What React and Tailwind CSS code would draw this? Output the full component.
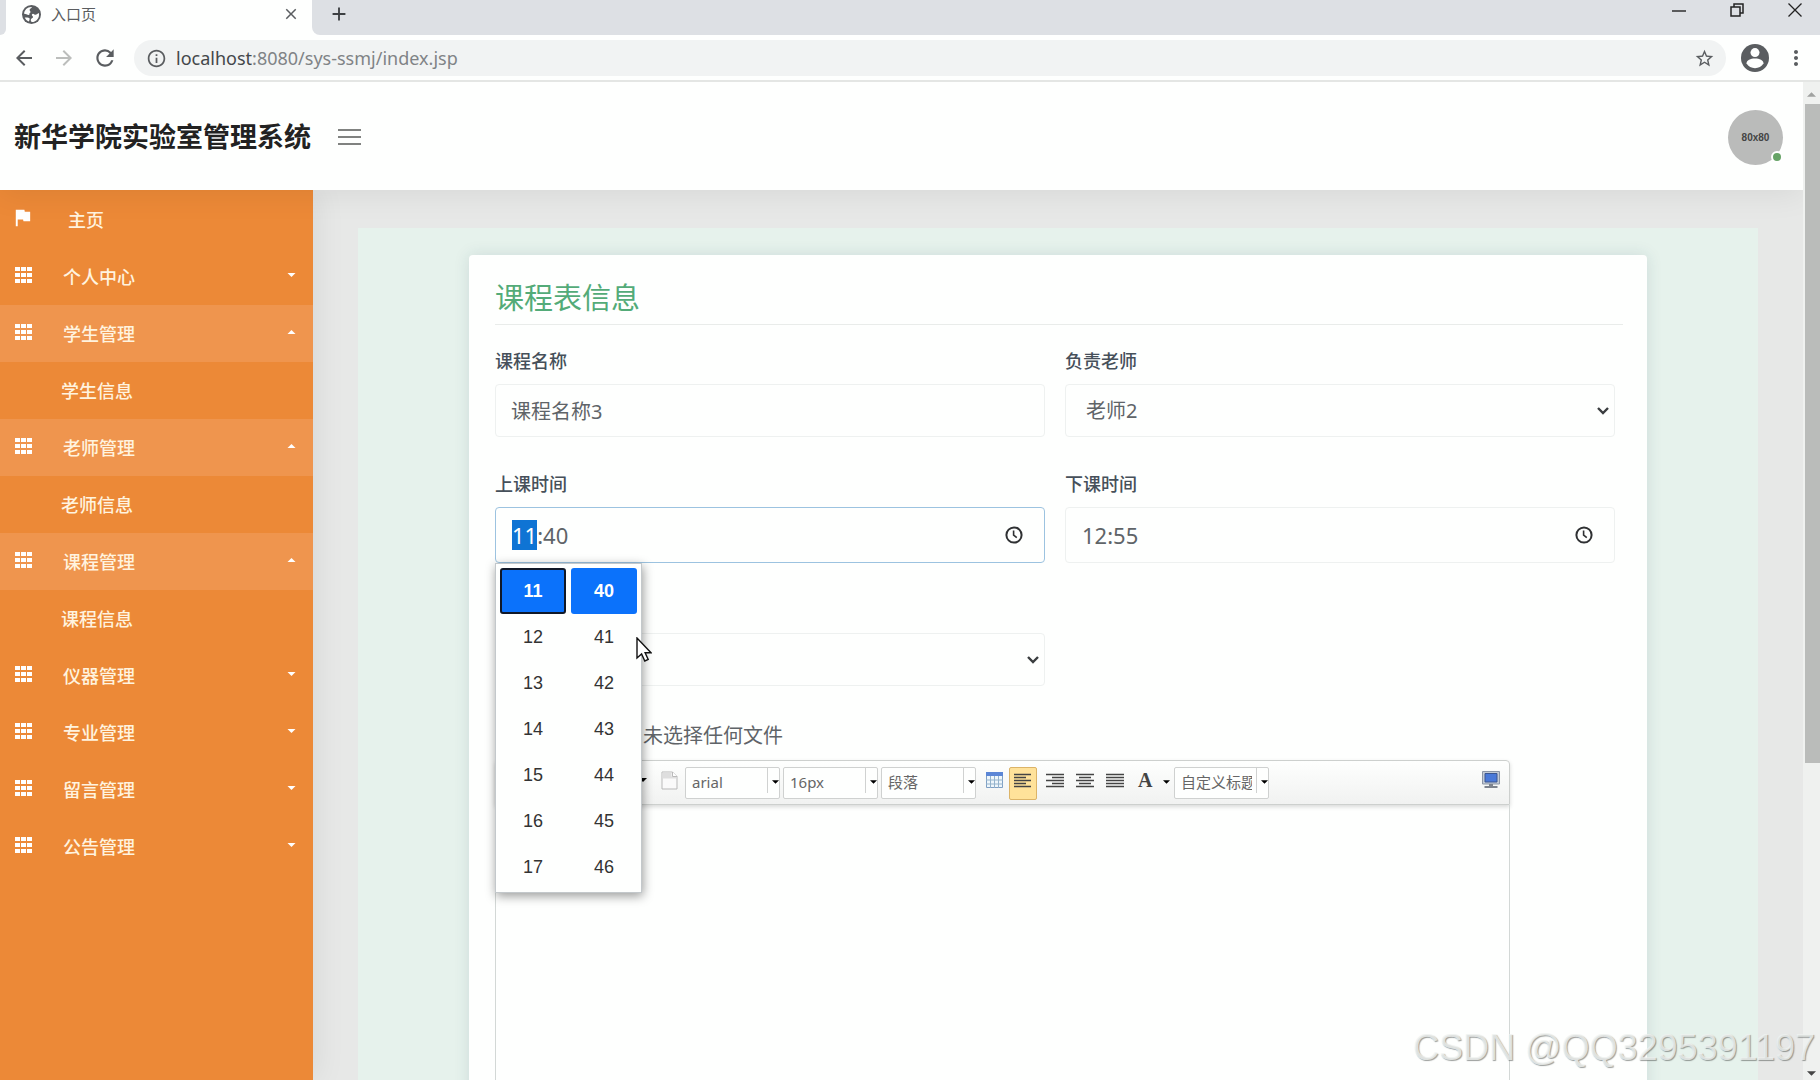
import { useEffect, useRef } from "react";
import {
  MdClose, MdAdd, MdArrowBack, MdArrowForward, MdRefresh, MdInfoOutline,
  MdStarBorder, MdMoreVert, MdFlag,
} from "react-icons/md";

const MENU = [
  { label: "主页", kind: "home" },
  { label: "个人中心", kind: "group" },
  { label: "学生管理", kind: "group", open: true },
  { label: "学生信息", kind: "sub" },
  { label: "老师管理", kind: "group", open: true },
  { label: "老师信息", kind: "sub" },
  { label: "课程管理", kind: "group", open: true },
  { label: "课程信息", kind: "sub" },
  { label: "仪器管理", kind: "group" },
  { label: "专业管理", kind: "group" },
  { label: "留言管理", kind: "group" },
  { label: "公告管理", kind: "group" },
];

const HOURS = ["11", "12", "13", "14", "15", "16", "17"];
const MINUTES = ["40", "41", "42", "43", "44", "45", "46"];

function Caret({ up = false, className = "" }) {
  return (
    <svg viewBox="0 0 8 4" className={className} aria-hidden="true">
      <path d={up ? "M0 4 4 0l4 4z" : "M0 0h8L4 4z"} fill="currentColor" />
    </svg>
  );
}

function GlobeIcon() {
  return (
    <svg viewBox="0 0 18 18" className="size-[19px]" aria-hidden="true">
      <circle cx="9" cy="9" r="9" fill="currentColor" />
      <path d="M9.500 1.800c-.4 1.300-2.300 1.300-2.300 2.900 0 .9.9 1.100.9 1.900 0 .9-1.200 1-1.200 2 0 .4.300.7.300.7-2 .5-3.200-.9-5.200-.9C2 4.700 5.200 1.500 9.500 1.800zM16 7.600c-1.300.3-1.900 1.600-3.300 1.600-1.100 0-1.300-1-2.300-1-.8 0-1.100.7-1.100 1.300 0 1 1.200 1 1.200 1.900 0 1.100-2.200 1.200-2.200 2.700 0 .9.700 1.300.9 2.100 4.500.1 7.700-4.100 6.800-8.600zM2.600 11.800c1.500.2 3.200-.5 4.300.6.700.7.300 2.200-.5 3.200-1.700-.7-3.100-2.100-3.800-3.800z" fill="#fefffe" />
    </svg>
  );
}

function UserIcon() {
  return (
    <svg viewBox="0 0 28 28" className="size-[28px]" aria-hidden="true">
      <circle cx="14" cy="14" r="14" fill="currentColor" />
      <circle cx="14" cy="8.600" r="4.500" fill="#fefffe" />
      <path d="M5.500 19.500c0-3.200 4-5 8.500-5s8.500 1.800 8.500 5c-1.900 2.900-5 4.700-8.500 4.700s-6.600-1.800-8.500-4.700z" fill="#fefffe" />
    </svg>
  );
}

function GridIcon() {
  return (
    <svg viewBox="0 0 17 16" className="mb-[3px] ml-[3px] h-[16px] w-[17px]" fill="#fff" aria-hidden="true">
      <path d="M0 0h5v4H0zM6 0h5v4H6zM12 0h5v4h-5zM0 6h5v4H0zM6 6h5v4H6zM12 6h5v4h-5zM0 12h5v4H0zM6 12h5v4H6zM12 12h5v4h-5z" />
    </svg>
  );
}

function BrowserChrome() {
  return (
    <div className="shrink-0 bg-[#fefffe] text-[#5a5d60]">
      <div className="flex h-[35px]">
        <div className="w-[6px] rounded-br-lg bg-[#dde0e4]" />
        <div className="flex w-[306px] items-center pb-[7px] pl-4 pr-3">
          <GlobeIcon />
          <span className="ml-[10px] flex-1 text-[15px] leading-5">入口页</span>
          <button aria-label="关闭标签页"><MdClose className="size-[18px]" /></button>
        </div>
        <div className="flex flex-1 items-center rounded-bl-lg bg-[#dde0e4] pb-[7px] pl-4 text-[#3c3f42]">
          <button aria-label="新标签页"><MdAdd className="size-[22px]" /></button>
          <div className="ml-auto flex items-center gap-[44px] pb-2 pr-[18px] text-[#222]">
            <button aria-label="最小化">
              <svg viewBox="0 0 14 14" className="size-[14px]"><path d="M0 8h14" stroke="currentColor" strokeWidth="1.4" /></svg>
            </button>
            <button aria-label="还原">
              <svg viewBox="0 0 14 14" className="size-[14px]" fill="none" stroke="currentColor" strokeWidth="1.5"><path d="M1 4h9v9H1zM4 4V1h9v9h-3" /></svg>
            </button>
            <button aria-label="关闭">
              <svg viewBox="0 0 14 14" className="size-[14px]" stroke="currentColor" strokeWidth="1.3"><path d="m.5.5 13 13m0-13-13 13" /></svg>
            </button>
          </div>
        </div>
      </div>
      <div className="flex h-[47px] items-center border-b-2 border-[#e4e6e4] px-3 pt-px">
        <button aria-label="后退"><MdArrowBack className="size-6" /></button>
        <button aria-label="前进" className="ml-4 text-[#bcbebc]"><MdArrowForward className="size-6" /></button>
        <button aria-label="刷新" className="ml-4"><MdRefresh className="size-[26px]" /></button>
        <div className="ml-4 flex h-[36px] flex-1 items-center rounded-full bg-[#f1f3f3] pl-3 pr-[11px]">
          <MdInfoOutline className="size-[21px]" />
          <span className="ml-[9px] flex-1 text-[18px] leading-6 text-[#808386]">
            <span className="text-[#44474a]">localhost</span>:8080/sys-ssmj/index.jsp
          </span>
          <button aria-label="收藏"><MdStarBorder className="size-[21px]" /></button>
        </div>
        <button aria-label="用户" className="ml-[15px]"><UserIcon /></button>
        <button aria-label="菜单" className="ml-[15px]"><MdMoreVert className="size-[24px]" /></button>
      </div>
    </div>
  );
}

function Sidebar() {
  return (
    <nav className="relative z-10 w-[313px] shrink-0 bg-[#ec8937] text-[18px] font-medium leading-6 text-[#fff3df] shadow-[2px_0_30px_rgba(0,0,0,0.08)]">
      {MENU.map(({ label, kind, open }) => {
        if (kind === "sub") {
          return <a key={label} href="#sub" className="flex h-[57px] items-center pl-[61px]">{label}</a>;
        }
        if (kind === "home") {
          return (
            <a key={label} href="#home" className="flex h-[58px] items-center pl-[11px]">
              <MdFlag className="mb-1 size-[23px] text-white" />
              <span className="ml-[34px] pt-px">{label}</span>
            </a>
          );
        }
        return (
          <button
            key={label}
            className={`flex h-[57px] w-full items-center pl-[12px] pr-[17px] text-left ${open ? "bg-[#ef954e]" : ""}`}
          >
            <GridIcon />
            <span className="ml-[31px] flex-1 pt-px">{label}</span>
            <Caret up={open} className="mb-[3px] h-[4px] w-[9px] text-white" />
          </button>
        );
      })}
    </nav>
  );
}

const LABEL = "block text-[18px] font-medium leading-6 text-[#46505a]";
const BOX = "w-full rounded border bg-[#fefffe] text-[#5f6468] outline-none";

function Chevron() {
  return (
    <svg viewBox="0 0 12 8" className="pointer-events-none absolute right-[6px] top-1/2 h-[8px] w-[12px] -translate-y-1/2" fill="none" stroke="#3a3d3f" strokeWidth="2.4" aria-hidden="true">
      <path d="m1 1 5 5 5-5" />
    </svg>
  );
}

function SelectField({ id, label, value }) {
  return (
    <div>
      <label htmlFor={id} className={LABEL}>{label}</label>
      <div className="relative mt-[11px]">
        <select id={id} className={`${BOX} h-[53px] appearance-none border-[#eef1f0] pl-[20px] pr-8 text-[20px]`} defaultValue={value}>
          <option value={value}>{value}</option>
        </select>
        <Chevron />
      </div>
    </div>
  );
}

function TimePicker() {
  return (
    <div className="absolute left-0 top-full z-20 w-[147px] border border-[#c3c8cb] bg-[#fefffe] px-1 pb-[2px] pt-1 font-['Liberation_Sans',sans-serif] shadow-[1px_3px_10px_rgba(0,0,0,0.4)]">
      <div className="grid grid-cols-2 gap-x-[5px]">
        {HOURS.map((hour, i) => [hour, MINUTES[i]].map((n, col) => (
          <button
            key={n}
            className={
              i === 0
                ? `h-[46px] rounded-[3px] bg-[#0b72fb] text-[18px] font-bold text-white ${col === 0 ? "border-2 border-[#101828]" : ""}`
                : "h-[46px] text-[18px] text-[#333]"
            }
          >
            {n}
          </button>
        )))}
      </div>
    </div>
  );
}

function TimeField({ id, label, value, active = false }) {
  const ref = useRef(null);
  useEffect(() => {
    if (active && ref.current) {
      ref.current.focus();
      ref.current.setSelectionRange(0, 2);
    }
  }, [active]);
  return (
    <div>
      <label htmlFor={id} className={LABEL}>{label}</label>
      <div className="relative mt-[11px]">
        <input
          ref={ref}
          id={id}
          type="text"
          inputMode="numeric"
          defaultValue={value}
          className={`${BOX} h-[56px] pl-4 pr-12 text-[22px] selection:bg-[#0f74d4] selection:text-white ${active ? "border-[#9cc3e0]" : "border-[#eef1f0]"}`}
        />
        <button aria-label="选择时间" className="absolute right-[22px] top-1/2 -translate-y-1/2">
          <svg viewBox="0 0 18 18" className="size-[18px]" fill="none" stroke="#2f3133" strokeWidth="2" aria-hidden="true">
            <circle cx="9" cy="9" r="7.6" />
            <path d="M8.6 4.6V9l3.2 2.6" strokeWidth="1.6" />
          </svg>
        </button>
        {active && <TimePicker />}
        {active && (
          <svg viewBox="0 0 16 25" className="absolute left-[141px] top-[130px] z-30 h-[25px] w-[16px]" aria-hidden="true">
            <path d="M1 1v20l4.6-4 3.2 7 3.4-1.5-3.1-6.7H15z" fill="#fff" stroke="#111" strokeWidth="1.4" />
          </svg>
        )}
      </div>
    </div>
  );
}

function Combo({ label, value }) {
  return (
    <div className="relative mr-[3px] h-[32px] w-[95px] shrink-0 overflow-hidden rounded-[2px] border border-[#cfd1d0] bg-[#fefffe]">
      <select aria-label={label} className="h-[29px] w-[77px] appearance-none overflow-hidden whitespace-nowrap pl-[6px] text-[15px] text-[#666] text-clip outline-none" defaultValue={value}>
        <option value={value}>{value}</option>
      </select>
      <span className="absolute right-[11px] top-0 h-[25px] w-px bg-[#d0d2d1]" />
      <Caret className="absolute right-0 top-[12px] h-[4px] w-[7px] text-black" />
    </div>
  );
}

const LINES = {
  left: "M0 1.5h17M0 4.5h12M0 7.5h17M0 10.5h12M0 13.5h17",
  right: "M0 1.5h18M6 4.5h12M0 7.5h18M6 10.5h12M0 13.5h18",
  center: "M0 1.5h18M3 4.5h12M0 7.5h18M3 10.5h12M0 13.5h18",
  full: "M0 1.5h18M0 4.5h18M0 7.5h18M0 10.5h18M0 13.5h18",
};

function AlignButton({ type, label, active = false }) {
  return (
    <button
      aria-label={label}
      className={`flex h-[33px] justify-center border pt-[5px] ${active ? "w-[28px] rounded-[2px] border-[#dcb468] bg-[#ffe29a]" : "w-[30px] border-transparent"}`}
    >
      <svg viewBox="0 0 18 15" className="h-[15px] w-[18px]" stroke="#444" strokeWidth="1.5"><path d={LINES[type]} /></svg>
    </button>
  );
}

function EditorToolbar() {
  return (
    <div className="flex h-[45px] items-start rounded-t border border-[#cdd0ce] bg-linear-to-b from-[#fefffe] to-[#f1f2f1] pl-[143px] pr-[9px] pt-[6px] shadow-[0_2px_4px_rgba(0,0,0,0.15)]">
      <Caret className="mt-[11px] h-[4px] w-[8px] text-black" />
      <button aria-label="新建文档" className="ml-[14px] mr-[7px] mt-[4px]">
        <svg viewBox="0 0 17 19" className="h-[19px] w-[17px]">
          <path d="M1 1h10.500l4.500 4.500V18H1z" fill="#fafafa" stroke="#b9b9b9" />
          <path d="M1.500 1.500h9v4h5v2h-14z" fill="#dedede" />
          <path d="M11.500 1v4.500H16" fill="#fff" stroke="#b9b9b9" />
        </svg>
      </button>
      <Combo label="字体" value="arial" />
      <Combo label="字号" value="16px" />
      <Combo label="段落格式" value="段落" />
      <button aria-label="插入表格" className="ml-[7px] mr-[6px] mt-[5px]">
        <svg viewBox="0 0 17 16" className="h-[16px] w-[17px]">
          <path d="M.5.500h16v15H.500z" fill="#eef6fb" stroke="#7f9fc4" />
          <path d="M0 0h17v4H0z" fill="#5b86d6" />
          <path d="M4.500 4v12M8.500 4v12M12.500 4v12M0 8h17M0 12h17" stroke="#94b3cc" />
        </svg>
      </button>
      <AlignButton type="left" label="左对齐" active />
      <span className="w-[3px]" />
      <AlignButton type="right" label="右对齐" />
      <AlignButton type="center" label="居中" />
      <AlignButton type="full" label="两端对齐" />
      <button aria-label="字体颜色" className="flex h-[26px] w-[40px] items-center justify-between pl-2 font-['Liberation_Serif',serif] text-[20px] font-bold leading-none text-[#444]">
        A
        <Caret className="mt-1 h-[4px] w-[7px] text-black" />
      </button>
      <span className="w-[4px]" />
      <Combo label="自定义标题" value="自定义标题" />
      <button aria-label="全屏" className="ml-auto mt-[4px]">
        <svg viewBox="0 0 18 17" className="h-[17px] w-[18px]">
          <path d="M.5.500h17v12.500H.500z" fill="#c3cbd6" stroke="#8b95a5" />
          <path d="M3 2.500h12v8.500H3z" fill="#4a79d8" stroke="#3c5790" />
          <path d="M7 13h4v2h4.500v2h-13v-2H7z" fill="#7d838d" />
        </svg>
      </button>
    </div>
  );
}

function CourseForm() {
  return (
    <form className="mx-[111px] flex-1 rounded-t-sm bg-[#fefffe] pl-[26px] pr-6 pt-[25px] shadow-[0_0_16px_rgba(30,70,90,0.13)]">
      <h1 className="border-b border-[#e9ecea] pb-2 text-[29px] leading-9 text-[#53ab78]">课程表信息</h1>
      <div className="mt-6 grid grid-cols-2 gap-x-5 gap-y-[35px] pr-2">
        <div>
          <label htmlFor="course" className={LABEL}>课程名称</label>
          <input id="course" type="text" defaultValue="课程名称3" className={`${BOX} mt-[11px] h-[53px] border-[#eef1f0] px-[15px] text-[20px]`} />
        </div>
        <SelectField id="teacher" label="负责老师" value="老师2" />
        <TimeField id="start" label="上课时间" value="11:40" active />
        <TimeField id="end" label="下课时间" value="12:55" />
        <div className="relative pt-[35px]">
          <select aria-label="星期" className={`${BOX} h-[53px] appearance-none border-[#eef1f0] pl-[20px] text-[20px]`} />
          <div className="absolute inset-x-0 bottom-0 h-[53px]"><Chevron /></div>
        </div>
      </div>
      <label className="mt-[35px] flex h-[30px] items-center text-[20px] text-[#5f6468]">
        <input type="file" className="sr-only" />
        <span className="mr-2 w-[140px]" />
        未选择任何文件
      </label>
      <div className="mt-[9px] w-[90%]">
        <EditorToolbar />
        <textarea aria-label="课程内容" className="block h-[420px] w-full resize-none border-x border-[#d3d8d6] bg-transparent p-3 outline-none" />
      </div>
    </form>
  );
}

export default function App() {
  return (
    <div className="relative flex h-screen flex-col overflow-hidden bg-[#fefffe] font-['Noto_Sans','Noto_Sans_CJK_SC',sans-serif]">
      <BrowserChrome />
      <div className="flex min-h-0 flex-1">
        <div className="flex min-w-0 flex-1 flex-col overflow-hidden">
          <header className="relative z-20 flex h-[108px] shrink-0 items-center bg-[#fefffe] pl-[14px] pr-[20px] pt-[2px] shadow-[0_4px_30px_rgba(0,0,0,0.07)]">
            <span className="text-[27px] font-bold leading-9 text-[#222]">新华学院实验室管理系统</span>
            <button aria-label="折叠菜单" className="ml-[27px] flex w-[23px] flex-col gap-[5px]">
              <span className="h-[2px] bg-[#808280]" />
              <span className="h-[2px] bg-[#808280]" />
              <span className="h-[2px] bg-[#808280]" />
            </button>
            <button className="relative ml-auto size-[55px] rounded-full bg-[#babbba] font-['Liberation_Sans',sans-serif] text-[10px] font-bold text-[#444]">
              80x80
              <span className="absolute bottom-[2px] right-0 size-[12px] rounded-full border-2 border-white bg-[#66a366]" />
            </button>
          </header>
          <div className="flex min-h-0 flex-1">
            <Sidebar />
            <main className="flex min-w-0 flex-1 flex-col bg-[#e7e8e7] px-[45px] pt-[38px]">
              <div className="flex flex-1 flex-col bg-[#e6f2ec] pt-[27px]">
                <CourseForm />
              </div>
            </main>
          </div>
        </div>
        <div className="flex w-[17px] flex-col items-center bg-[#eff1ef] pb-[4px] pt-[10px] text-[#a0a2a0]">
          <Caret up className="h-[5px] w-[9px] shrink-0" />
          <div className="mt-[7px] h-[67%] w-[15px] self-end bg-[#babcba]" />
          <Caret className="mt-auto h-[5px] w-[9px] shrink-0 text-[#444]" />
        </div>
      </div>
      <div className="pointer-events-none absolute bottom-[12px] right-[5px] z-40 font-['Liberation_Sans',sans-serif] text-[36px] leading-10 text-[#f1f4f2]/80 [text-shadow:1px_1px_1px_rgba(90,95,92,0.6)]">
        CSDN @QQ3295391197
      </div>
    </div>
  );
}
